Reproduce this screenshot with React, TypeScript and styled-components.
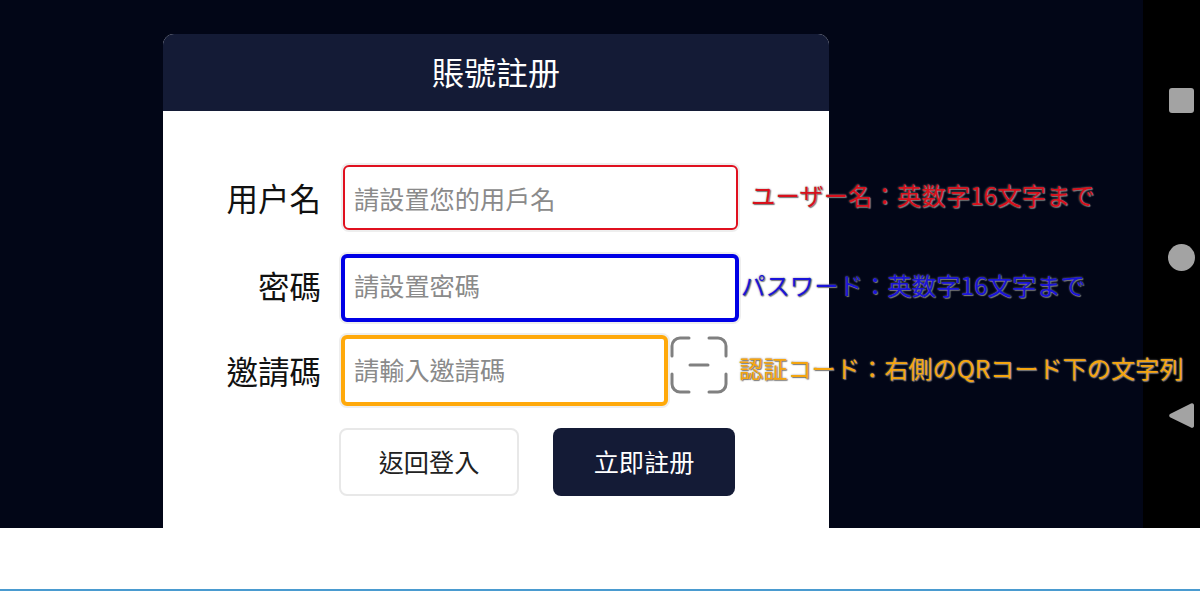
import React from "react";
import styled, { createGlobalStyle } from "styled-components";

const GlobalStyle = createGlobalStyle`
  html, body {
    margin: 0;
    padding: 0;
    background: #fff;
    font-family: "Noto Sans CJK TC", "Noto Sans", sans-serif;
  }
  * {
    box-sizing: border-box;
  }
`;

const Page = styled.div`
  position: relative;
  width: 1200px;
  height: 591px;
  display: flex;
  flex-direction: column;
  overflow: hidden;
  background: #fff;
`;

const Phone = styled.div`
  height: 528px;
  display: flex;
  overflow: hidden;
`;

const Stage = styled.div`
  flex: 1;
  padding: 34px 0 0 163px;
  background: #020617;
`;

const NavBar = styled.div`
  width: 57px;
  padding: 88px 5px 99px 24px;
  background: #000;
  display: flex;
  flex-direction: column;
  align-items: center;
  justify-content: space-between;
`;

const NavSquare = styled.div`
  width: 25px;
  height: 25px;
  border-radius: 3px;
  background: #a3a3a3;
`;

const NavCircle = styled.div`
  width: 27px;
  height: 27px;
  border-radius: 50%;
  background: #a3a3a3;
`;

const Card = styled.div`
  width: 666px;
  height: 494px;
  background: #fff;
  border-radius: 11px 11px 0 0;
  overflow: hidden;
`;

const CardHeader = styled.div`
  height: 77px;
  padding-bottom: 3px;
  background: #141b36;
  color: #fff;
  font-size: 32px;
  line-height: 74px;
  text-align: center;
`;

const Form = styled.div`
  padding-top: 54px;
  display: flex;
  flex-direction: column;
`;

const Row = styled.div<{ $mb: number }>`
  display: flex;
  align-items: center;
  margin-bottom: ${(p) => p.$mb}px;
`;

const Label = styled.div<{ $lift: number }>`
  width: 158px;
  margin: 0 20px ${(p) => p.$lift}px 0;
  text-align: right;
  color: #111;
  font-size: 31.5px;
  line-height: 40px;
`;

const Field = styled.input<{ $color: string; $line: number; $w: number; $h: number; $ml?: number; $lift: number }>`
  width: ${(p) => p.$w}px;
  height: ${(p) => p.$h}px;
  margin-left: ${(p) => p.$ml ?? 0}px;
  padding: 0 9px ${(p) => p.$lift}px;
  border: ${(p) => p.$line}px solid ${(p) => p.$color};
  border-radius: 6px;
  outline: none;
  background: #fff;
  font-family: inherit;
  font-size: 25.2px;
  color: #333;
  box-shadow: 0 0 0 2px #eee;
  &::placeholder {
    color: #8a8a8a;
    opacity: 1;
  }
`;

const ScanButton = styled.div`
  width: 58px;
  height: 58px;
  margin-left: 2px;
  margin-top: -11px;
  color: #808080;
`;

const Actions = styled.div`
  display: flex;
  gap: 34px;
  margin-left: 176px;
`;

const ActionButton = styled.button<{ $primary?: boolean }>`
  width: ${(p) => (p.$primary ? 182 : 180)}px;
  height: 68px;
  padding: 0 0 2px;
  border-radius: 8px;
  border: ${(p) => (p.$primary ? "none" : "2px solid #e8e8e8")};
  background: ${(p) => (p.$primary ? "#141b36" : "#fff")};
  color: ${(p) => (p.$primary ? "#fff" : "#222")};
  font-family: inherit;
  font-size: 25.2px;
`;

const Note = styled.div<{ $color: string; $x: number; $y: number; $size: number }>`
  position: absolute;
  left: ${(p) => p.$x}px;
  top: ${(p) => p.$y}px;
  color: ${(p) => p.$color};
  font-family: "Noto Sans CJK JP", sans-serif;
  font-size: ${(p) => p.$size}px;
  line-height: 32px;
  font-weight: 400;
  white-space: nowrap;
  text-shadow: 0 0 2px #888, 1px 1px 1px #777;
`;

const Footer = styled.div`
  flex: 1;
  display: flex;
  align-items: flex-end;
`;

const FooterLine = styled.div`
  width: 100%;
  height: 2px;
  background: #4a9bd0;
`;

const ScanIcon = () => (
  <svg width="58" height="58" viewBox="0 0 58 58" fill="none" stroke="currentColor" strokeWidth="3" strokeLinecap="round">
    <path d="M2 20V10a8 8 0 0 1 8-8h9" />
    <path d="M39 2h9a8 8 0 0 1 8 8v10" />
    <path d="M2 38v10a8 8 0 0 0 8 8h9" />
    <path d="M39 56h9a8 8 0 0 0 8-8V38" />
    <path d="M20 29h18" />
  </svg>
);

const BackIcon = () => (
  <svg width="26" height="27" viewBox="0 0 26 27" fill="#a3a3a3">
    <path d="M23 1.5L2 12a2 2 0 0 0 0 3.2L23 25.6a2 2 0 0 0 3-1.8V3.2a2 2 0 0 0-3-1.7z" />
  </svg>
);

export default function App() {
  return (
    <Page>
      <GlobalStyle />
      <Phone>
        <Stage>
          <Card>
            <CardHeader>賬號註册</CardHeader>
            <Form>
              <Row $mb={24}>
                <Label $lift={2}>用户名</Label>
                <Field $color="#e0101f" $line={2} $w={395} $h={65} $ml={2} $lift={0} placeholder="請設置您的用戶名" />
              </Row>
              <Row $mb={13}>
                <Label $lift={6}>密碼</Label>
                <Field $color="#0000e6" $line={4} $w={398} $h={68} $lift={6} placeholder="請設置密碼" />
              </Row>
              <Row $mb={22}>
                <Label $lift={2}>邀請碼</Label>
                <Field $color="#ffa90a" $line={4} $w={327} $h={71} $lift={4} placeholder="請輸入邀請碼" />
                <ScanButton>
                  <ScanIcon />
                </ScanButton>
              </Row>
              <Actions>
                <ActionButton>返回登入</ActionButton>
                <ActionButton $primary>立即註册</ActionButton>
              </Actions>
            </Form>
          </Card>
        </Stage>
        <NavBar>
          <NavSquare />
          <NavCircle />
          <BackIcon />
        </NavBar>
      </Phone>
      <Footer>
        <FooterLine />
      </Footer>
      <Note $color="#d8101c" $size={24.4} $x={751} $y={179}>ユーザー名：英数字16文字まで</Note>
      <Note $color="#1a14d8" $size={24.4} $x={741} $y={269}>パスワード：英数字16文字まで</Note>
      <Note $color="#f5a50f" $size={24.2} $x={739} $y={352}>認証コード：右側のQRコード下の文字列</Note>
    </Page>
  );
}
